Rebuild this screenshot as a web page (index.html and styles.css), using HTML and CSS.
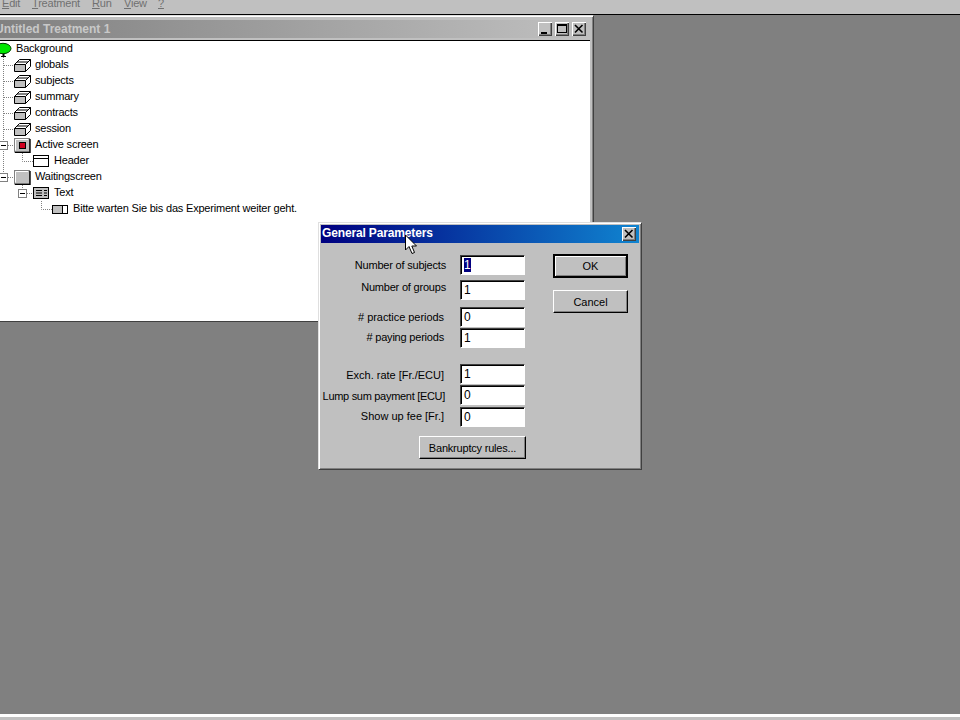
FILE: index.html
```html
<!DOCTYPE html>
<html lang="en">
<head>
<meta charset="utf-8">
<title>General Parameters</title>
<link rel="stylesheet" href="styles.css">
</head>
<body>
<svg class="defs" width="0" height="0" aria-hidden="true">
  <symbol id="i-box" viewBox="0 0 18 16">
    <path d="M1.5 7.5H12.5L17.5 2.5H6.5Z" fill="#fff" stroke="#000"/>
    <path d="M1.5 7.5H12.5V14.5H1.5Z" fill="#c0c0c0" stroke="#000"/>
    <path d="M12.5 7.5L17.5 2.5V9.5L12.5 14.5Z" fill="#fff" stroke="#000"/>
    <path d="M4 5H15" stroke="#000"/>
  </symbol>
  <symbol id="i-screen" viewBox="0 0 18 16">
    <rect x="1.5" y="1.5" width="15" height="13.5" fill="#c0c0c0" stroke="#808080"/>
    <path d="M2 15.5H17V2" fill="none" stroke="#000" stroke-width="1.4"/>
    <path d="M2.5 13.5V2.5H15" fill="none" stroke="#fff"/>
  </symbol>
</svg>

<div class="app">
  <nav class="menubar">
    <span class="menu m-edit"><u>E</u>dit</span>
    <span class="menu m-treat"><u>T</u>reatment</span>
    <span class="menu m-run"><u>R</u>un</span>
    <span class="menu m-view"><u>V</u>iew</span>
    <span class="menu"><u>?</u></span>
  </nav>
  <main class="desktop">
    <section class="window tree-window">
      <header class="wtitle">
        <span class="wtitle-text">Untitled Treatment 1</span>
        <div class="wbuttons">
          <span class="wbtn"><svg width="14" height="14"><rect x="3" y="10" width="6" height="2" fill="#000"/></svg></span>
          <span class="wbtn"><svg width="14" height="14"><rect x="2.5" y="2.5" width="9" height="8" fill="none" stroke="#000"/><path d="M2 3.5H12" stroke="#000"/></svg></span>
          <span class="wbtn wbtn-gap"><svg width="14" height="14"><path d="M3 3L10.5 10.5M10.5 3L3 10.5" stroke="#000" stroke-width="1.6"/></svg></span>
        </div>
      </header>
      <div class="client">
        <svg class="connectors" width="80" height="190" aria-hidden="true">
          <g stroke="#808080" stroke-dasharray="1 1" fill="none">
            <path d="M3.5 12V137"/>
            <path d="M4 24.5H14M4 40.5H14M4 56.5H14M4 72.5H14M4 88.5H14M8 104.5H14M8 136.5H14"/>
            <path d="M22.5 112V120.5H33M22.5 144V148M27 152.5H33"/>
            <path d="M41.5 160V168.5H52"/>
          </g>
          <g fill="#fff" stroke="#808080">
            <rect x="-0.5" y="100.5" width="8" height="8"/>
            <rect x="-0.5" y="132.5" width="8" height="8"/>
            <rect x="18.5" y="148.5" width="8" height="8"/>
          </g>
          <path d="M1 104.5H6M1 136.5H6M20 152.5H25" stroke="#000"/>
        </svg>
        <ul class="tree">
          <li class="row row-root">
            <svg class="root-icon" width="16" height="16" viewBox="0 0 16 16"><path d="M5.5 11V15" stroke="#000" stroke-width="2"/><path d="M3 15.5H8" stroke="#000"/><ellipse cx="5" cy="7.5" rx="8" ry="5.2" fill="#00e800" stroke="#004000"/></svg>
            <span>Background</span>
          </li>
          <li class="row lvl1"><svg class="icon"><use href="#i-box"/></svg><span>globals</span></li>
          <li class="row lvl1"><svg class="icon"><use href="#i-box"/></svg><span>subjects</span></li>
          <li class="row lvl1"><svg class="icon"><use href="#i-box"/></svg><span>summary</span></li>
          <li class="row lvl1"><svg class="icon"><use href="#i-box"/></svg><span>contracts</span></li>
          <li class="row lvl1"><svg class="icon"><use href="#i-box"/></svg><span>session</span></li>
          <li class="row lvl1">
            <svg class="icon" viewBox="0 0 18 16"><use href="#i-screen" width="18" height="16"/><rect x="6.5" y="5.5" width="6" height="6" fill="#d00020" stroke="#000"/></svg>
            <span>Active screen</span>
          </li>
          <li class="row lvl2">
            <svg class="icon" viewBox="0 0 18 16"><rect x="1.5" y="2.5" width="15" height="11" fill="#fff" stroke="#000"/><path d="M2 5.5H16" stroke="#000"/></svg>
            <span>Header</span>
          </li>
          <li class="row lvl1"><svg class="icon"><use href="#i-screen"/></svg><span>Waitingscreen</span></li>
          <li class="row lvl2">
            <svg class="icon" viewBox="0 0 18 16"><rect x="1.5" y="2.5" width="15" height="11" fill="#c0c0c0" stroke="#000"/><path d="M4 5.5H10M4 8H10M4 10.5H10M12 5.5H15M12 8H15M12 10.5H15" stroke="#000"/></svg>
            <span>Text</span>
          </li>
          <li class="row lvl3">
            <svg class="icon" viewBox="0 0 18 16"><rect x="1.5" y="4.5" width="15" height="8" fill="#c0c0c0" stroke="#000"/><rect x="11.5" y="4.5" width="5" height="8" fill="#fff" stroke="#000"/></svg>
            <span>Bitte warten Sie bis das Experiment weiter geht.</span>
          </li>
        </ul>
      </div>
    </section>

    <section class="window dialog">
      <header class="dtitle">
        <span>General Parameters</span>
        <span class="wbtn dclose"><svg width="14" height="14"><path d="M3 3L10.5 10.5M10.5 3L3 10.5" stroke="#000" stroke-width="1.6"/></svg></span>
      </header>
      <div class="dbody">
        <form class="fields">
          <div class="field f-a"><label class="lab-a">Number of subjects</label><span class="input"><span class="sel">1</span></span></div>
          <div class="field f-b"><label class="lab-b">Number of groups</label><span class="input">1</span></div>
          <div class="field f-c"><label class="lab-c"># practice periods</label><span class="input">0</span></div>
          <div class="field f-d"><label class="lab-d"># paying periods</label><span class="input">1</span></div>
          <div class="field f-e"><label class="lab-e">Exch. rate [Fr./ECU]</label><span class="input">1</span></div>
          <div class="field f-f"><label class="lab-f">Lump sum payment [ECU]</label><span class="input">0</span></div>
          <div class="field f-g"><label class="lab-g">Show up fee [Fr.]</label><span class="input">0</span></div>
          <div class="bankrupt"><button type="button" class="btn btn-wide">Bankruptcy rules...</button></div>
        </form>
        <div class="actions">
          <button type="button" class="btn btn-ok">OK</button>
          <button type="button" class="btn">Cancel</button>
        </div>
      </div>
    </section>

    <svg class="cursor" width="14" height="22" viewBox="0 0 14 22" aria-hidden="true">
      <path d="M1.5 1V16L5 12.5L8 19.5L10.5 18.5L7.8 12H12.5Z" fill="#fff" stroke="#000"/>
    </svg>
  </main>
  <footer class="statusbar"></footer>
</div>
</body>
</html>
```
FILE: styles.css
```css
* { box-sizing: border-box; }
html, body { margin: 0; padding: 0; height: 100%; overflow: hidden; }
body { background: #808080; font-family: "Liberation Sans", Arial, sans-serif; font-size: 11px; color: #000; }
.defs { position: absolute; }

.app { width: 960px; height: 720px; display: flex; flex-direction: column; }

.menubar {
  height: 15px; flex: none; display: flex; align-items: flex-end;
  background: #c0c0c0; border-bottom: 1px solid #000; overflow: hidden;
  padding: 0 0 4px 2px; color: #707070; font-size: 11px; line-height: 14px; letter-spacing: -0.2px;
}
.menu { white-space: nowrap; }
.m-edit { width: 30px; }
.m-treat { width: 60px; }
.m-run { width: 32px; }
.m-view { width: 34px; }

.desktop { flex: 1; position: relative; background: #808080; overflow: hidden; }

.window {
  position: absolute; background: #c0c0c0;
  border: 1px solid #404040; border-top-color: #dfdfdf; border-left-color: #dfdfdf;
  box-shadow: inset 1px 1px 0 #fff, inset -1px -1px 0 #808080;
}

.tree-window { left: -10px; top: 0; width: 604px; height: 307px; padding: 4px 3px 2px 4px; }
.wtitle {
  height: 18px; display: flex; align-items: center; justify-content: space-between;
  background: linear-gradient(90deg, #808080, #c0c0c0);
  color: #c8c8c8; font-weight: bold; font-size: 12px; padding-right: 4px;
}
.wtitle-text { white-space: nowrap; }
.wbuttons { display: flex; gap: 3px; }
.wbtn {
  width: 14px; height: 14px; display: block; background: #c0c0c0;
  box-shadow: inset 1px 1px 0 #fff, inset -1px -1px 0 #404040, inset -2px -2px 0 #808080;
}
.wbtn svg { display: block; }
.client {
  position: relative; height: 281px; margin-top: 2px; margin-left: 5px; background: #fff;
  border-top: 1px solid #000; overflow: hidden;
}
.connectors { position: absolute; left: 0; top: 0; overflow: visible; }

.tree { list-style: none; margin: 0; padding: 0; position: relative; }
.row { height: 16px; display: flex; align-items: center; white-space: nowrap; font-size: 11px; letter-spacing: -0.2px; }
.row span { margin-top: -2px; }
.row-root { padding-left: 16px; position: relative; }
.root-icon { position: absolute; left: -2px; top: 0; }
.icon { width: 18px; height: 16px; flex: none; display: block; margin-right: 4px; }
.lvl1 { padding-left: 13px; }
.lvl2 { padding-left: 32px; }
.lvl3 { padding-left: 51px; }

.dialog { left: 318px; top: 207px; width: 324px; height: 248px; padding: 2px; }
.dtitle {
  height: 18px; display: flex; align-items: center; justify-content: space-between;
  background: linear-gradient(90deg, #000080, #1084d0);
  color: #fff; font-weight: bold; font-size: 12px; letter-spacing: -0.15px; padding: 0 3px 2px 1px;
}
.dclose { margin-top: 2px; }
.dbody { display: flex; padding-top: 12px; }
.fields { width: 204px; flex: none; display: flex; flex-direction: column; }
.field { display: flex; align-items: center; justify-content: flex-end; height: 20px; }
label { white-space: nowrap; font-size: 11px; letter-spacing: -0.2px; position: relative; margin-right: 16px; }
.lab-a { top: 0; margin-right: 14px; }
.lab-b { top: -3px; margin-right: 14px; }
.lab-c { top: 0; margin-right: 16px; letter-spacing: -0.05px; }
.lab-d { top: -1px; }
.lab-e { top: 1px; letter-spacing: 0; }
.lab-f { top: 1px; margin-right: 15px; letter-spacing: -0.3px; }
.lab-g { top: -1px; letter-spacing: 0; }
.f-b { margin-top: 5px; }
.f-c { margin-top: 7px; }
.f-d { margin-top: 1px; }
.f-e { margin-top: 16px; }
.f-f { margin-top: 1px; }
.f-g { margin-top: 2px; }
.input {
  width: 65px; height: 20px; flex: none; display: block; background: #fff; padding: 2px 0 0 3px;
  line-height: 14px; font-size: 12px;
  border: 1px solid #fff; border-top-color: #404040; border-left-color: #404040;
  box-shadow: inset 1px 1px 0 #000;
}
.sel { background: #000080; color: #fff; display: inline-block; line-height: 14px; }
.bankrupt { display: flex; justify-content: flex-end; margin-top: 9px; margin-right: -1px; }

.actions { display: flex; flex-direction: column; gap: 12px; margin-left: 28px; margin-top: -1px; }
.btn {
  width: 75px; height: 23px; padding: 0; font: 11px "Liberation Sans", Arial, sans-serif; color: #000;
  background: #c0c0c0; border: 1px solid #000; border-top-color: #fff; border-left-color: #fff;
  box-shadow: inset -1px -1px 0 #808080;
}
.btn-ok { height: 24px; border: 2px solid #000; box-shadow: inset 1px 1px 0 #fff, inset -1px -1px 0 #808080; }
.btn-wide { width: 107px; letter-spacing: -0.2px; }

.cursor { position: absolute; left: 404px; top: 219px; }
.statusbar { height: 6px; flex: none; background: #c0c0c0; border-top: 2px solid #fff; box-shadow: inset 0 1px 0 #fff; }
```
